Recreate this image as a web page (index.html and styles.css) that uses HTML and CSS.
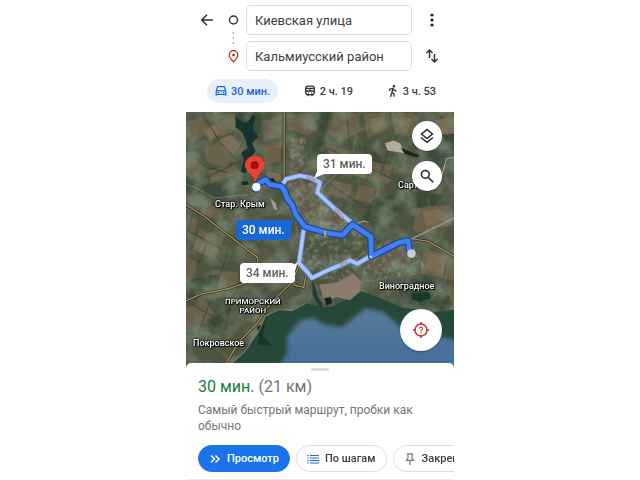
FILE: index.html
```html
<!DOCTYPE html>
<html lang="ru">
<head>
    <meta charset="UTF-8">
    <meta name="viewport" content="width=device-width, initial-scale=1.0">
    <title>Киевская улица – Кальмиусский район</title>
    <link rel="stylesheet" href="styles.css">
</head>
<body>
    <div class="phone">
        <header>
            <form class="points">
                <button type="button" class="icon-btn back" aria-label="Назад">
                    <svg width="18" height="18" viewBox="0 0 24 24"><path d="M20 12H5M12 5l-7 7 7 7" fill="none" stroke="#333" stroke-width="2.200"/></svg>
                </button>
                <svg class="marker" width="14" height="14" viewBox="0 0 14 14"><circle cx="7.500" cy="7" r="4" fill="none" stroke="#333" stroke-width="1.400"/></svg>
                <input type="text" value="Киевская улица" aria-label="Откуда">
                <button type="button" class="icon-btn" aria-label="Ещё">
                    <svg width="16" height="16" viewBox="0 0 16 16" fill="#222"><circle cx="8" cy="3" r="1.600"/><circle cx="8" cy="8" r="1.600"/><circle cx="8" cy="13" r="1.600"/></svg>
                </button>

                <svg class="dots" width="14" height="12" viewBox="0 0 14 12" fill="#777"><circle cx="7.500" cy="1" r=".8"/><circle cx="7.500" cy="6" r=".8"/><circle cx="7.500" cy="11" r=".8"/></svg>

                <svg class="marker second" width="14" height="14" viewBox="0 0 14 14"><path d="M7.500 12.800C5 10.500 3.200 8.400 3.200 6a4.300 4.300 0 0 1 8.600 0c0 2.400-1.800 4.500-4.300 6.800z" fill="none" stroke="#b3261e" stroke-width="1.200"/><circle cx="7.500" cy="6" r="1.300" fill="#b3261e"/></svg>
                <input class="second" type="text" value="Кальмиусский район" aria-label="Куда">
                <button type="button" class="icon-btn second" aria-label="Поменять местами">
                    <svg width="16" height="16" viewBox="0 0 16 16" fill="none" stroke="#333" stroke-width="1.500"><path d="M5.500 10V2.500M2.500 5l3-3 3 3M10.500 6v7.500M7.500 11l3 3 3-3"/></svg>
                </button>
            </form>
            <nav class="modes">
                <button type="button" class="mode active">
                    <svg width="12" height="12" viewBox="0 0 12 12" fill="none" stroke="#1967d2" stroke-width="1.200"><path d="M1.200 10.800V6L2.700 1.700h6.600L10.800 6v4.800M1.200 5.800h9.600M1.200 9.400h9.600"/><path d="M2.800 7.600h1.400M7.800 7.600h1.400"/></svg>
                    30 мин.
                </button>
                <button type="button" class="mode">
                    <svg width="12" height="12" viewBox="0 0 12 12" fill="none" stroke="#333" stroke-width="1.300"><rect x="1.700" y="1.200" width="8.600" height="8.400" rx="2"/><path d="M2 3.400h8M2 6h8M6 3.400V6M3.500 11.200l1-1.400M8.500 11.200l-1-1.400M3.800 7.800h1M7.200 7.800h1"/></svg>
                    2 ч. 19
                </button>
                <button type="button" class="mode">
                    <svg width="12" height="12" viewBox="0 0 12 12" fill="none" stroke="#333" stroke-width="1.300"><circle cx="7" cy="1.300" r="1.200" fill="#333" stroke="none"/><path d="M2.800 6V4.200L6 3.200l1 2 2.500 1M6 3.200L5 7.200l2 1.600v3M5.200 6.500L3.500 12"/></svg>
                    3 ч. 53
                </button>
            </nav>
        </header>

        <main class="map">
            <svg class="imagery" viewBox="0 6 804 753" preserveAspectRatio="xMidYMid slice" aria-hidden="true">
                <defs>
                    <filter id="grain" x="0" y="0" width="100%" height="100%">
                        <feTurbulence type="fractalNoise" baseFrequency=".016" numOctaves="5" seed="4"/>
                        <feColorMatrix values="0 0 0 0 .19  0 0 0 0 .24  0 0 0 0 .17  0 2.600 0 0 -1.050"/>
                    </filter>
                    <filter id="speckle" x="0" y="0" width="100%" height="100%">
                        <feTurbulence type="fractalNoise" baseFrequency=".07" numOctaves="3" seed="9"/>
                        <feColorMatrix values="0 0 0 0 .52  0 0 0 0 .48  0 0 0 0 .42  2 0 0 0 -.9"/>
                    </filter>
                    <filter id="soft"><feGaussianBlur stdDeviation="7"/></filter>
                    <filter id="edge"><feGaussianBlur stdDeviation="2"/></filter>
                    <linearGradient id="deep" x1="0" y1="0" x2="0" y2="1">
                        <stop offset="0" stop-color="#5a7b9a"/>
                        <stop offset="1" stop-color="#3f6c9b"/>
                    </linearGradient>
                    <clipPath id="city"><path d="M290 190L400 210 440 280 560 370 680 400 720 480 560 510 400 500 350 450 320 300zM310 80l50 0 0 110-50 0z"/></clipPath>
                </defs>
                <rect y="6" width="804" height="753" fill="#4d5541"/>

                <!-- fields -->
                <g filter="url(#edge)">
                    <g fill="#6a5f4a">
                        <path d="M0 40l50-22 30 42-56 38-24-20z"/>
                        <path d="M88 20l62-12 8 50-50 22z"/>
                        <path d="M60 118l50-28 46 36-34 46-58-20z"/>
                        <path d="M10 140l44 22-14 40-40-10z"/>
                        <path d="M70 180l84-20 6 28-74 26z"/>
                        <path d="M236 30l50-8 0 60-52 6z"/>
                        <path d="M232 108l54-6v48l-48 12z"/>
                        <path d="M306 14l74-4 14 46-30 20-58-20z"/>
                        <path d="M440 18l70-10 14 54-60 30-40-26z"/>
                        <path d="M530 10l64-2 10 50-62 26z"/>
                        <path d="M612 8l64 0 20 20-30 50-44-10z"/>
                        <path d="M420 100l62 20-18 40-50-26z"/>
                        <path d="M556 150l60 14-10 56-62-14z"/>
                        <path d="M520 220l60 14-14 46-66-18z"/>
                        <path d="M440 210l58 10-16 46-56-20z"/>
                        <path d="M690 290l92-10 20 50-100 44-26-24z"/>
                        <path d="M710 400l90 34v70l-104-22z"/>
                        <path d="M720 520l80-2v62l-60-10z"/>
                        <path d="M0 300l40 24-12 60-28-4z"/>
                        <path d="M46 350l72 30-26 60-66-28z"/>
                        <path d="M0 430l40 20-10 52-30 14z"/>
                        <path d="M80 470l80 10 0 34-76 20z"/>
                        <path d="M0 590l60-30 30 40-52 50-38-12z"/>
                        <path d="M60 270l60 30-12 30-60-26z"/>
                    </g>
                    <g fill="#7c6a51">
                        <path d="M100 92l38-20 30 30-22 30z"/>
                        <path d="M60 62l30-20 18 28-32 24z"/>
                        <path d="M244 180l40 8 4 24-44-6z"/>
                        <path d="M548 28l44-10 8 34-42 18z"/>
                        <path d="M640 20l34 4-14 46-32-10z"/>
                        <path d="M704 300l52-8 12 36-52 16z"/>
                        <path d="M722 420l50 20-4 44-56-14z"/>
                        <path d="M56 392l44 16-14 28-44-18z"/>
                        <path d="M492 160l52 8-8 34-50-14z"/>
                        <path d="M740 30l60-12v50l-48 6z"/>
                    </g>
                    <g fill="#3b4b37">
                        <path d="M160 8h70l-6 60-30 20-28-30z"/>
                        <path d="M0 200l60 20 60-8 40 30-40 20-60-10-60 0z"/>
                        <path d="M130 320l60 30 40 60-60-14z"/>
                        <path d="M396 8l36 0-16 60 10 60-36 40-22-30 24-50z"/>
                        <path d="M560 260l120-20 90 10-30 30-110 20-70 50-30-30z"/>
                        <path d="M500 80l50 20 40 60-60-16z"/>
                        <path d="M20 500l90-16-16 60-80 20z"/>
                        <path d="M80 620l60-40-16 70-70 30z"/>
                        <path d="M660 470l110 50 34 80-140-30z"/>
                        <path d="M700 80l100-10v70l-60 40z"/>
                    </g>
                    <g stroke="#3d4837" stroke-width="3" fill="none">
                        <path d="M0 110l70 60 100 24M54 8l54 90 60 60M0 230l170-80M230 100l65-12M380 90l120 60 150 70M400 200l140 90M480 6l20 200M610 100l-60 190M660 380l140 60M700 360l-60 180M790 380l-40 190M0 350l130 70-80 220M30 290l-30 120M100 320l-60 140M0 560l120 70"/>
                        <path d="M520 6l-20 120M600 6l20 100M420 150l200 60M720 260l30 160" stroke="#796d50" stroke-width="2"/>
                    </g>

                    <!-- built-up area -->
                    <g fill="#6c6052" opacity=".65">
                        <path d="M300 200l90 20 20 60 100 60-50 20-90-14-40-60z"/>
                        <path d="M320 88l36-10-4 90-44 34z"/>
                        <path d="M560 400l90-20 20 70-90 40-40-20z"/>
                        <path d="M190 400l60 10 30 60-60 20z" opacity=".6"/>
                    </g>
                </g>
                <rect y="6" width="804" height="753" filter="url(#grain)" opacity=".8"/>
                <g clip-path="url(#city)" opacity=".5"><rect y="6" width="804" height="753" filter="url(#speckle)"/></g>
                <path d="M594 98l26-8 20 10 10 28-20-4-28-4z" fill="#b5ad9c"/>
                <path d="M640 112l56 22-8 6-34-10z" fill="#16261d"/>
                <path d="M256 260l16 16 4 20-12-6z" fill="#a39c88"/>

                <!-- rivers and ponds -->
                <path d="M154 14q12 26 34 22l16-22 8 6-10 34 18 24-18 20 10 24-20 24-10 42-14-6 10-38-8-18 18-14-6-24-10-22-20-16z" fill="#17332e"/>
                <path d="M170 212l18-2 4 10-20 2zM240 202l24 0 10 14-24 2z" fill="#18291f"/>
                <path d="M672 542l52-4 6 18-34 12-24-10z" fill="#183b28"/>

                <!-- sea -->
                <path d="M130 759l50-46 42-60 18-44 40-20 40 4 40-22 46 10 30 0 60-30 28-16 60 22 60 26 90 14 70-8v170z" fill="#264838"/>
                <path d="M380 500l16 50 14 26-6 10-24-38z" fill="#243c36"/>
                <path d="M400 516l50-6 50-28 24 26-6 30-28 24-40-10-34 16z" fill="#8b7a6e" filter="url(#edge)"/>
                <path d="M216 640l24-12-8 40 30 30-46-6 6-24z" fill="#183427"/>
                <path d="M278 762l26-42 2-54 40-46 36-6 34 20 50 8 70-56 50 10 60 50 34 26 72-6 60 18v100z" fill="url(#deep)" filter="url(#soft)"/>
                <path d="M130 759l50-46 42-60 18-44 40-20 40 4 40-22" fill="none" stroke="#7b7961" stroke-width="3"/>
                <path d="M414 556l20-4 4 18-16 8z" fill="#0d201c"/>

                <!-- roads -->
                <g fill="none" stroke="#2b2a1e" stroke-width="8">
                    <path d="M296 6V212M0 276l60 38 158 122 0 24-18 26M0 566l50-22 80-16 84-28M340 460l-22 50-60 58-42 62-54 56-44 72M360 490l-6 34-34-8M672 380l50 8 80 46"/>
                </g>
                <g fill="none" stroke="#a98f58" stroke-width="4">
                    <path d="M296 6V212M0 276l60 38 158 122 0 24-18 26M0 566l50-22 80-16 84-28M340 460l-22 50-60 58-42 62-54 56-44 72M360 490l-6 34-34-8M672 380l50 8 80 46"/>
                </g>
                <g fill="none" stroke="#aaa998" stroke-width="3">
                    <path d="M670 382l134-66M804 138l-28 6-18 60M500 340l30-12 16 4" />
                    <path d="M0 218l40 14 50 28 100-10M400 240l60-60" opacity=".4"/>
                </g>

                <!-- alternative routes -->
                <g fill="none" stroke-linejoin="round" stroke-linecap="round">
                    <path d="M294 216l8-12 40-10 32 6 28 14-8 30 50 46 50 42M354 352l-14 100 26 28 12 16 50-24 44-18 18-10 22 10 38-22" stroke="#688fd4" stroke-width="15"/>
                    <path d="M294 216l8-12 40-10 32 6 28 14-8 30 50 46 50 42M354 352l-14 100 26 28 12 16 50-24 44-18 18-10 22 10 38-22" stroke="#a9c6fb" stroke-width="10"/>
                    <path d="M450 294l18 22M366 198l18 8M464 458l16-8" stroke="#aaa4b8" stroke-width="10"/>
                    <!-- main route -->
                    <path d="M212 234l10-18 20-10 12 14 34 6 10 14 8 24 14 16 10 28 26 36 62 18 50 8 30-32 54 36 2 58 80-40 28-6 4 32" stroke="#1747a5" stroke-width="21"/>
                    <path d="M212 234l10-18 20-10 12 14 34 6 10 14 8 24 14 16 10 28 26 36 62 18 50 8 30-32 54 36 2 58 80-40 28-6 4 32" stroke="#427fec" stroke-width="14"/>
                    <path d="M417 358v14" stroke="#d5a25c" stroke-width="5"/>
                </g>
                <circle cx="552" cy="434" r="4" fill="#c9d4e6"/>
                <circle cx="672" cy="424" r="13" fill="#c8ccd2"/>
                <circle cx="214" cy="228" r="12" fill="#fff"/>
                <path d="M211 214c-5-22-31-36-31-50a29 29 0 0 1 58 0c0 14-22 28-27 50z" fill="#ea4335"/>
                <circle cx="209" cy="163" r="12" fill="#a50e0e"/>

                <!-- callout tails -->
                <path d="M396 176l20 12-32 14z" fill="#fff"/>
                <path d="M296 336l28-16-12 40z" fill="#1967d2"/>
                <path d="M300 472l36-22-12 40z" fill="#fff"/>
            </svg>

            <span class="place krym">Стар. Крым</span>
            <span class="place sartana">Сартана</span>
            <span class="place vino">Виноградное</span>
            <span class="place primorsky">ПРИМОРСКИЙ<br>РАЙОН</span>
            <span class="place pokrov">Покровское</span>

            <button type="button" class="time time-31">31 мин.</button>
            <button type="button" class="time time-30">30 мин.</button>
            <button type="button" class="time time-34">34 мин.</button>

            <button type="button" class="fab layers" aria-label="Слои">
                <svg width="16" height="16" viewBox="0 0 16 16" fill="none" stroke="#222" stroke-width="1.400"><path d="M8 1.500L13.500 6 8 10.500 2.500 6zM2 9.500l6 4.800 6-4.800"/></svg>
            </button>
            <button type="button" class="fab search" aria-label="Поиск">
                <svg width="16" height="16" viewBox="0 0 16 16" fill="none" stroke="#222" stroke-width="1.500"><circle cx="6.300" cy="6.300" r="3.900"/><path d="M9.200 9.200l5 5"/></svg>
            </button>
            <button type="button" class="fab locate" aria-label="Моё местоположение">
                <svg width="18" height="18" viewBox="0 0 18 18" fill="none" stroke="#c5352b" stroke-width="1.500"><circle cx="9" cy="9" r="6"/><path d="M9 1v3M9 14v3M1 9h3M14 9h3"/><path d="M7.500 7.800a1.500 1.500 0 1 1 2.400 1.100Q9 9.400 9 10.200M9 11.100v1.100" stroke-width="1.100"/></svg>
            </button>
        </main>

        <section class="sheet">
            <div class="handle"></div>
            <h1>30 мин. <span>(21 км)</span></h1>
            <p>Самый быстрый маршрут, пробки как обычно</p>
            <div class="actions">
                <button type="button" class="action primary">
                    <svg width="12" height="12" viewBox="0 0 12 12" fill="none" stroke="#fff" stroke-width="1.500"><path d="M2 2.500L5.500 6 2 9.500M6.500 2.500L10 6 6.500 9.500"/></svg>
                    Просмотр
                </button>
                <button type="button" class="action">
                    <svg width="12" height="12" viewBox="0 0 12 12" stroke="#1967d2" stroke-width="1.200"><path d="M0 2.500h1.500M3 2.500h9M0 5h1.500M3 5h9M0 7.500h1.500M3 7.500h9M0 10h1.500M3 10h9"/></svg>
                    По шагам
                </button>
                <button type="button" class="action">
                    <svg width="12" height="12" viewBox="0 0 12 12" fill="none" stroke="#777" stroke-width="1.200"><path d="M3 .8h6M4 .8V5L2.500 7.400h7L8 5V.8M6 7.400V12"/></svg>
                    Закрепить
                </button>
            </div>
        </section>
    </div>
</body>
</html>
```
FILE: styles.css
```css
:root {
    --blue: #1a73e8;
    --text: #3c4043;
    --muted: #757575;
    --border: #dadce0;
}

* { box-sizing: border-box; }

body, h1, p { margin: 0; }
body {
    font-family: Roboto, "Noto Sans", sans-serif;
    color: var(--text);
    background: #fff;
}

button, input { font-family: inherit; }
button {
    padding: 0;
    border: none;
    background: none;
    cursor: pointer;
}
svg { display: block; flex: none; }

.phone {
    display: flex;
    flex-direction: column;
    max-width: 268px;
    min-height: 100vh;
    margin: 0 auto;
    overflow: hidden;
}

header { padding: 5px 0 9px; }

.points {
    display: grid;
    grid-template-columns: 28px 20px 1fr 28px;
    grid-template-rows: 30px 6px 30px;
    align-items: center;
    padding: 0 14px 0 12px;
}

.points input {
    width: 100%;
    height: 30px;
    padding: 0 8px;
    border: 1px solid var(--border);
    border-radius: 5px;
    font-size: 13px;
    color: var(--text);
}

.icon-btn { justify-self: end; }
.back { justify-self: start; }
.dots { grid-column: 2; grid-row: 2; }
.second { grid-row: 3; }
.marker.second { grid-column: 2; }
input.second { grid-column: 3; }
.icon-btn.second { grid-column: 4; }

.modes {
    display: flex;
    justify-content: space-between;
    padding: 8px 10px 0 21px;
}

.mode {
    display: flex;
    align-items: center;
    gap: 4px;
    height: 24px;
    padding: 0 8px;
    border-radius: 12px;
    font-size: 11px;
    font-weight: 500;
    color: var(--text);
}

.mode.active {
    background: #e8f0fe;
    color: #1967d2;
}

.map {
    position: relative;
    flex: 1 0 240px;
}

.imagery {
    position: absolute;
    inset: 0;
    width: 100%;
    height: 100%;
}

.place {
    position: absolute;
    font-size: 9px;
    line-height: 10px;
    font-weight: 500;
    color: #fff;
    text-align: center;
    text-shadow: 0 0 2px #000, 0 0 2px #000, 0 0 1px #000, 1px 1px 1px #000;
}

.krym { left: 29px; top: 87px; }
.sartana { left: 212px; top: 68px; }
.vino { left: 193px; top: 169px; }
.primorsky { left: 39px; top: 185px; font-size: 8px; line-height: 9px; }
.pokrov { left: 7px; top: 226px; }

.time {
    position: absolute;
    height: 20px;
    padding: 0 6px;
    border-radius: 4px;
    background: #fff;
    color: #616161;
    font-size: 12px;
    font-weight: 500;
}

.time-31 { left: 131px; top: 42px; }
.time-30 { left: 50px; top: 108px; background: #1967d2; color: #fff; }
.time-34 { left: 54px; top: 151px; }

.fab {
    position: absolute;
    display: flex;
    align-items: center;
    justify-content: center;
    right: 12px;
    width: 30px;
    height: 30px;
    border-radius: 50%;
    background: #fff;
    box-shadow: 0 1px 2px rgba(0, 0, 0, 0.3);
}

.layers { top: 9px; }
.search { top: 49px; }
.locate {
    bottom: 16px;
    width: 42px;
    height: 42px;
}

.sheet {
    position: relative;
    margin-top: -4px;
    padding: 5px 0 7px;
    border-bottom: 1px solid #e8eaed;
    border-radius: 5px 5px 0 0;
    background: #fff;
}

.handle {
    width: 18px;
    height: 3px;
    margin: 0 auto 6px;
    border-radius: 2px;
    background: var(--border);
}

h1 {
    padding-left: 12px;
    font-size: 16px;
    line-height: 20px;
    font-weight: 400;
    color: #188038;
}

h1 span { color: var(--muted); }

.sheet p {
    padding: 5px 24px 11px 12px;
    font-size: 12px;
    line-height: 16px;
    color: var(--muted);
}

.actions {
    display: flex;
    gap: 6px;
    padding-left: 12px;
    overflow: hidden;
}

.action {
    display: flex;
    flex: none;
    align-items: center;
    gap: 6px;
    height: 27px;
    padding: 0 10px;
    border: 1px solid var(--border);
    border-radius: 14px;
    font-size: 11px;
    font-weight: 500;
    color: var(--text);
}

.action.primary {
    border-color: var(--blue);
    background: var(--blue);
    color: #fff;
}
```
